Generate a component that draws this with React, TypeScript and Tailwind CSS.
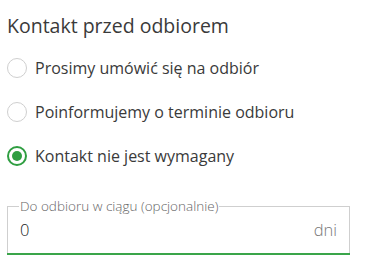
import { useState } from "react";

const options = [
  "Prosimy umówić się na odbiór",
  "Poinformujemy o terminie odbioru",
  "Kontakt nie jest wymagany",
];

function Radio({ checked }: { checked: boolean }) {
  if (checked) {
    return (
      <span className="flex h-[20px] w-[20px] items-center justify-center rounded-full border-2 border-[#2f9e41]">
        <span className="h-[10px] w-[10px] rounded-full bg-[#2f9e41]" />
      </span>
    );
  }
  return <span className="h-[20px] w-[20px] rounded-full border border-[#cfcfcf]" />;
}

export default function App() {
  const [selected, setSelected] = useState(2);

  return (
    <div
      className="h-[268px] w-[380px] bg-white px-[7px] pt-[12px] text-[#3a3a3a]"
      style={{ fontFamily: '"Open Sans", sans-serif' }}
    >
      <h2 className="text-[19.5px] leading-[28px]">Kontakt przed odbiorem</h2>

      <div className="mt-[18px] flex flex-col gap-[24px]">
        {options.map((label, i) => (
          <label
            key={label}
            className="flex h-[20px] cursor-pointer items-center gap-[8px] text-[16px]"
            onClick={() => setSelected(i)}
          >
            <Radio checked={selected === i} />
            <span>{label}</span>
          </label>
        ))}
      </div>

      {/* Pole z etykietą w ramce */}
      <fieldset className="mt-[33px] h-[56px] w-[343px] border border-b-0 border-[#cfcfcf] px-[12px] pb-0">
        <legend className="-ml-[1px] px-[1px] text-[13.5px] font-light leading-[14px] text-[#666]">
          Do odbioru w ciągu (opcjonalnie)
        </legend>
        <div className="flex items-center justify-between pt-[6px] text-[16.5px] font-light leading-[22px]">
          <span className="text-[#222]">0</span>
          <span className="text-[#777]">dni</span>
        </div>
      </fieldset>
      <div className="-mt-[2px] h-[2px] w-[343px] bg-[#3aa54a]" />
    </div>
  );
}
